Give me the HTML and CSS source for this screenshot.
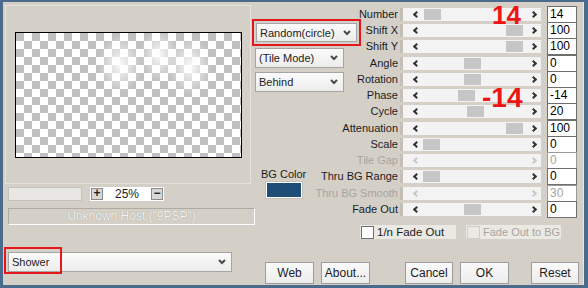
FILE: index.html
```html
<!doctype html>
<html lang="en">
    <head>
        <meta charset="UTF-8" />
        <title>Shower</title>
        <link rel="stylesheet" href="styles.css">
    </head>
    <body>
        <div class="window">
            <div class="left">
                <div class="preview-frame">
                    <div class="preview">
                        <span class="blob blob-a"></span>
                        <span class="blob blob-b"></span>
                        <span class="blob blob-c"></span>
                    </div>
                </div>
                <div class="zoom-row">
                    <div class="zoom-bar"></div>
                    <div class="zoom-box">
                        <span class="zbtn">+</span>
                        <span class="zval">25%</span>
                        <span class="zbtn">&minus;</span>
                    </div>
                </div>
                <div class="host">Unknown Host ("9PSP")</div>
                <div class="combo combo-filter">
                    <span>Shower</span>
                    <svg class="chev" width="8" height="6" viewBox="0 0 8 6"><path d="M1 1 L4 4 L7 1" /></svg>
                    <span class="mark"></span>
                </div>
            </div>

            <div class="right">
                <div class="params">
                    <div class="middle">
                        <div class="combo combo-random">
                            <span>Random(circle)</span>
                            <svg class="chev" width="8" height="6" viewBox="0 0 8 6"><path d="M1 1 L4 4 L7 1" /></svg>
                        </div>
                        <div class="combo combo-tile">
                            <span>(Tile Mode)</span>
                            <svg class="chev" width="8" height="6" viewBox="0 0 8 6"><path d="M1 1 L4 4 L7 1" /></svg>
                        </div>
                        <div class="combo combo-behind">
                            <span>Behind</span>
                            <svg class="chev" width="8" height="6" viewBox="0 0 8 6"><path d="M1 1 L4 4 L7 1" /></svg>
                        </div>
                        <div class="bgcolor">
                            <span>BG Color</span>
                            <span class="swatch"></span>
                        </div>
                    </div>

                    <span class="label">Number</span>
                    <div class="track"><i class="arr-l"></i><span class="thumb" style="left: 21px"></span><i class="arr-r"></i></div>
                    <span class="value">14</span>

                    <span class="label">Shift X</span>
                    <div class="track"><i class="arr-l"></i><span class="thumb" style="left: 103px"></span><i class="arr-r"></i></div>
                    <span class="value">100</span>

                    <span class="label">Shift Y</span>
                    <div class="track"><i class="arr-l"></i><span class="thumb" style="left: 103px"></span><i class="arr-r"></i></div>
                    <span class="value">100</span>

                    <span class="label">Angle</span>
                    <div class="track"><i class="arr-l"></i><span class="thumb" style="left: 61px"></span><i class="arr-r"></i></div>
                    <span class="value">0</span>

                    <span class="label">Rotation</span>
                    <div class="track"><i class="arr-l"></i><span class="thumb" style="left: 61px"></span><i class="arr-r"></i></div>
                    <span class="value">0</span>

                    <span class="label">Phase</span>
                    <div class="track"><i class="arr-l"></i><span class="thumb" style="left: 55px"></span><i class="arr-r"></i></div>
                    <span class="value">-14</span>

                    <span class="label">Cycle</span>
                    <div class="track"><i class="arr-l"></i><span class="thumb" style="left: 64px"></span><i class="arr-r"></i></div>
                    <span class="value">20</span>

                    <span class="label">Attenuation</span>
                    <div class="track"><i class="arr-l"></i><span class="thumb" style="left: 103px"></span><i class="arr-r"></i></div>
                    <span class="value">100</span>

                    <span class="label">Scale</span>
                    <div class="track"><i class="arr-l"></i><span class="thumb" style="left: 20px"></span><i class="arr-r"></i></div>
                    <span class="value">0</span>

                    <span class="label disabled">Tile Gap</span>
                    <div class="track disabled"><i class="arr-l"></i><i class="arr-r"></i></div>
                    <span class="value disabled">0</span>

                    <span class="label">Thru BG Range</span>
                    <div class="track"><i class="arr-l"></i><span class="thumb" style="left: 20px"></span><i class="arr-r"></i></div>
                    <span class="value">0</span>

                    <span class="label disabled">Thru BG Smooth</span>
                    <div class="track disabled"><i class="arr-l"></i><i class="arr-r"></i></div>
                    <span class="value disabled">30</span>

                    <span class="label">Fade Out</span>
                    <div class="track"><i class="arr-l"></i><span class="thumb" style="left: 61px"></span><i class="arr-r"></i></div>
                    <span class="value">0</span>

                    <span class="note note-number">14</span>
                    <span class="note note-phase">-14</span>
                </div>

                <div class="checks">
                    <label class="check"><span class="box"></span>1/n Fade Out</label>
                    <label class="check disabled"><span class="box"></span>Fade Out to BG</label>
                </div>

                <div class="buttons">
                    <button>Web</button>
                    <button>About...</button>
                    <button class="btn-cancel">Cancel</button>
                    <button>OK</button>
                    <button class="btn-reset">Reset</button>
                </div>
            </div>
        </div>
    </body>
</html>
```

FILE: styles.css
```css
* {
    box-sizing: border-box;
}

body {
    font-family: "Liberation Sans", Arial, sans-serif;
    font-size: 11px;
    color: #1c1c1c;
    margin: 0;
    background-color: #d4d0c8;
}

.window {
    width: 588px;
    height: 288px;
    display: flex;
    background-color: #d4d0c8;
    border-style: solid;
    border-color: #4a6b8b;
    border-width: 2px 4px 3px 3px;
}

/* left side: preview */
.left {
    width: 252px;
    display: flex;
    flex-direction: column;
}

.preview-frame {
    width: 246px;
    height: 179px;
    margin: 3px 0 0 2px;
    padding: 26px 0 0 9px;
    border: 1px solid #e6e3dd;
}

.preview {
    position: relative;
    overflow: hidden;
    width: 227px;
    height: 126px;
    border: 1px solid #000;
    background: repeating-conic-gradient(#fff 0 25%, #c0c0c0 0 50%) 0 0 / 16px 16px;
}

.blob {
    position: absolute;
    background: radial-gradient(closest-side, rgba(255, 255, 255, 0.9), rgba(255, 255, 255, 0));
}
.blob-a {
    left: 82px;
    top: 2px;
    width: 44px;
    height: 58px;
}
.blob-b {
    left: 124px;
    top: -4px;
    width: 38px;
    height: 52px;
}
.blob-c {
    left: 152px;
    top: 4px;
    width: 44px;
    height: 58px;
}

.zoom-row {
    display: flex;
    gap: 8px;
    height: 14px;
    margin: 3px 0 0 5px;
}

.zoom-bar {
    width: 74px;
    background-color: #e8e7e4;
    border: 1px solid #c5c2bb;
}

.zoom-box {
    width: 74px;
    display: flex;
    align-items: center;
    justify-content: space-between;
    padding: 0 1px;
    background-color: #fff;
}

.zbtn {
    width: 12px;
    height: 12px;
    border: 1px solid #8a8a8a;
    background-color: #d8d8d8;
    font-weight: bold;
    font-size: 12px;
    line-height: 9px;
    text-align: center;
}

.zval {
    font-size: 12px;
}

.host {
    width: 247px;
    height: 17px;
    margin: 7px 0 0 5px;
    border: 1px solid #aeaba4;
    border-right-color: #fff;
    border-bottom-color: #fff;
    text-align: center;
    line-height: 15px;
    font-size: 12px;
    color: #f4f3ef;
    text-shadow: 0 0 1px #8f8c85;
}

/* combo boxes */
.combo {
    position: relative;
    display: flex;
    align-items: center;
    justify-content: space-between;
    height: 20px;
    padding: 0 5px 0 3px;
    border: 1px solid #a5a5a5;
    background: linear-gradient(#fbfbfb, #ececec);
    white-space: nowrap;
}

.chev path {
    fill: none;
    stroke: #4a4a4a;
    stroke-width: 2;
}

.combo-filter {
    width: 224px;
    margin: 27px 0 0 5px;
}

.combo-filter .mark {
    position: absolute;
    left: -5px;
    top: -6px;
    width: 58px;
    height: 27px;
    border: 2px solid #e4181c;
}

/* right side: parameters */
.right {
    flex: 1;
    display: flex;
    flex-direction: column;
    border-right: 1px solid #e9e6e0;
}

.params {
    position: relative;
    display: grid;
    grid-template-columns: 0 145px 141px 36px;
    grid-template-rows: repeat(3, 16px 16px 17px 16px) 16px;
    margin-top: 4px;
}

.middle {
    grid-column: 1;
    grid-row: 1 / -1;
    display: flex;
    flex-direction: column;
    align-items: flex-start;
}

.combo-random {
    width: 101px;
    height: 19px;
    margin: 17px 0 0 1px;
    outline: 2px solid #e4181c;
    outline-offset: 2px;
}

.combo-tile {
    width: 89px;
    margin-top: 6px;
}

.combo-behind {
    width: 89px;
    margin-top: 4px;
}

.bgcolor {
    display: flex;
    flex-direction: column;
    align-items: center;
    gap: 2px;
    margin: 76px 0 0 6px;
    white-space: nowrap;
}

.swatch {
    width: 36px;
    height: 16px;
    background-color: #1e4e77;
    border: 1px solid #fff;
    box-shadow: 0 0 0 1px #c4c1ba;
}

.label {
    padding-right: 2px;
    text-align: right;
    white-space: nowrap;
    line-height: 16px;
}

.track {
    position: relative;
    align-self: center;
    display: flex;
    align-items: center;
    justify-content: space-between;
    height: 13px;
    padding: 0 3px 0 9px;
    border-left: 3px solid #c3bfb7;
    background-color: #f3f3f3;
}

.arr-l,
.arr-r {
    width: 5px;
    height: 5px;
    border: solid #333;
    border-width: 0 0 2px 2px;
}
.arr-l {
    transform: translateX(2px) rotate(45deg);
}
.arr-r {
    transform: translateX(-2px) rotate(-135deg);
}

.thumb {
    position: absolute;
    top: 1px;
    width: 17px;
    height: 11px;
    background-color: #c6c6c6;
}

.track.disabled .arr-l,
.track.disabled .arr-r {
    border-color: #c9c9c9;
}

.value {
    justify-self: end;
    align-self: center;
    width: 30px;
    height: 17px;
    padding-left: 2px;
    border: 1px solid #6f6f6f;
    background-color: #fff;
    color: #000;
    font-size: 12px;
    line-height: 15px;
}

.disabled {
    color: #a7a49e;
}

.value.disabled {
    color: #a7a49e;
    border-color: #9a9a9a;
}

.note {
    position: absolute;
    font-weight: bold;
    font-size: 26px;
    line-height: 1;
    color: #ee1515;
}
.note-number {
    left: 237px;
    top: -4px;
}
.note-phase {
    left: 227px;
    top: 78px;
    font-size: 28px;
}

/* check boxes */
.checks {
    display: flex;
    gap: 10px;
    height: 14px;
    margin: 8px 0 0 105px;
}

.check {
    display: flex;
    align-items: center;
    gap: 3px;
    width: 96px;
    padding-left: 1px;
    background-color: #ebe9e4;
    font-size: 11.5px;
    white-space: nowrap;
}

.check .box {
    width: 13px;
    height: 13px;
    border: 1px solid #6f6f6f;
    background-color: #fff;
}

.check.disabled {
    width: 95px;
    font-size: 11px;
}

.check.disabled .box {
    border-color: #cfcdc8;
    background-color: #ebe9e4;
}

/* buttons */
.buttons {
    display: flex;
    gap: 7px;
    margin: 23px 0 0 10px;
}

.buttons button {
    width: 49px;
    height: 22px;
    padding: 0;
    font-family: inherit;
    font-size: 12px;
    color: #1c1c1c;
    border: 1px solid #9c9c9c;
    background: linear-gradient(#fafafa, #ededed);
}

.buttons .btn-cancel {
    width: 48px;
    margin-left: 28px;
}

.buttons .btn-reset {
    width: 48px;
    margin-left: 15px;
}
```
